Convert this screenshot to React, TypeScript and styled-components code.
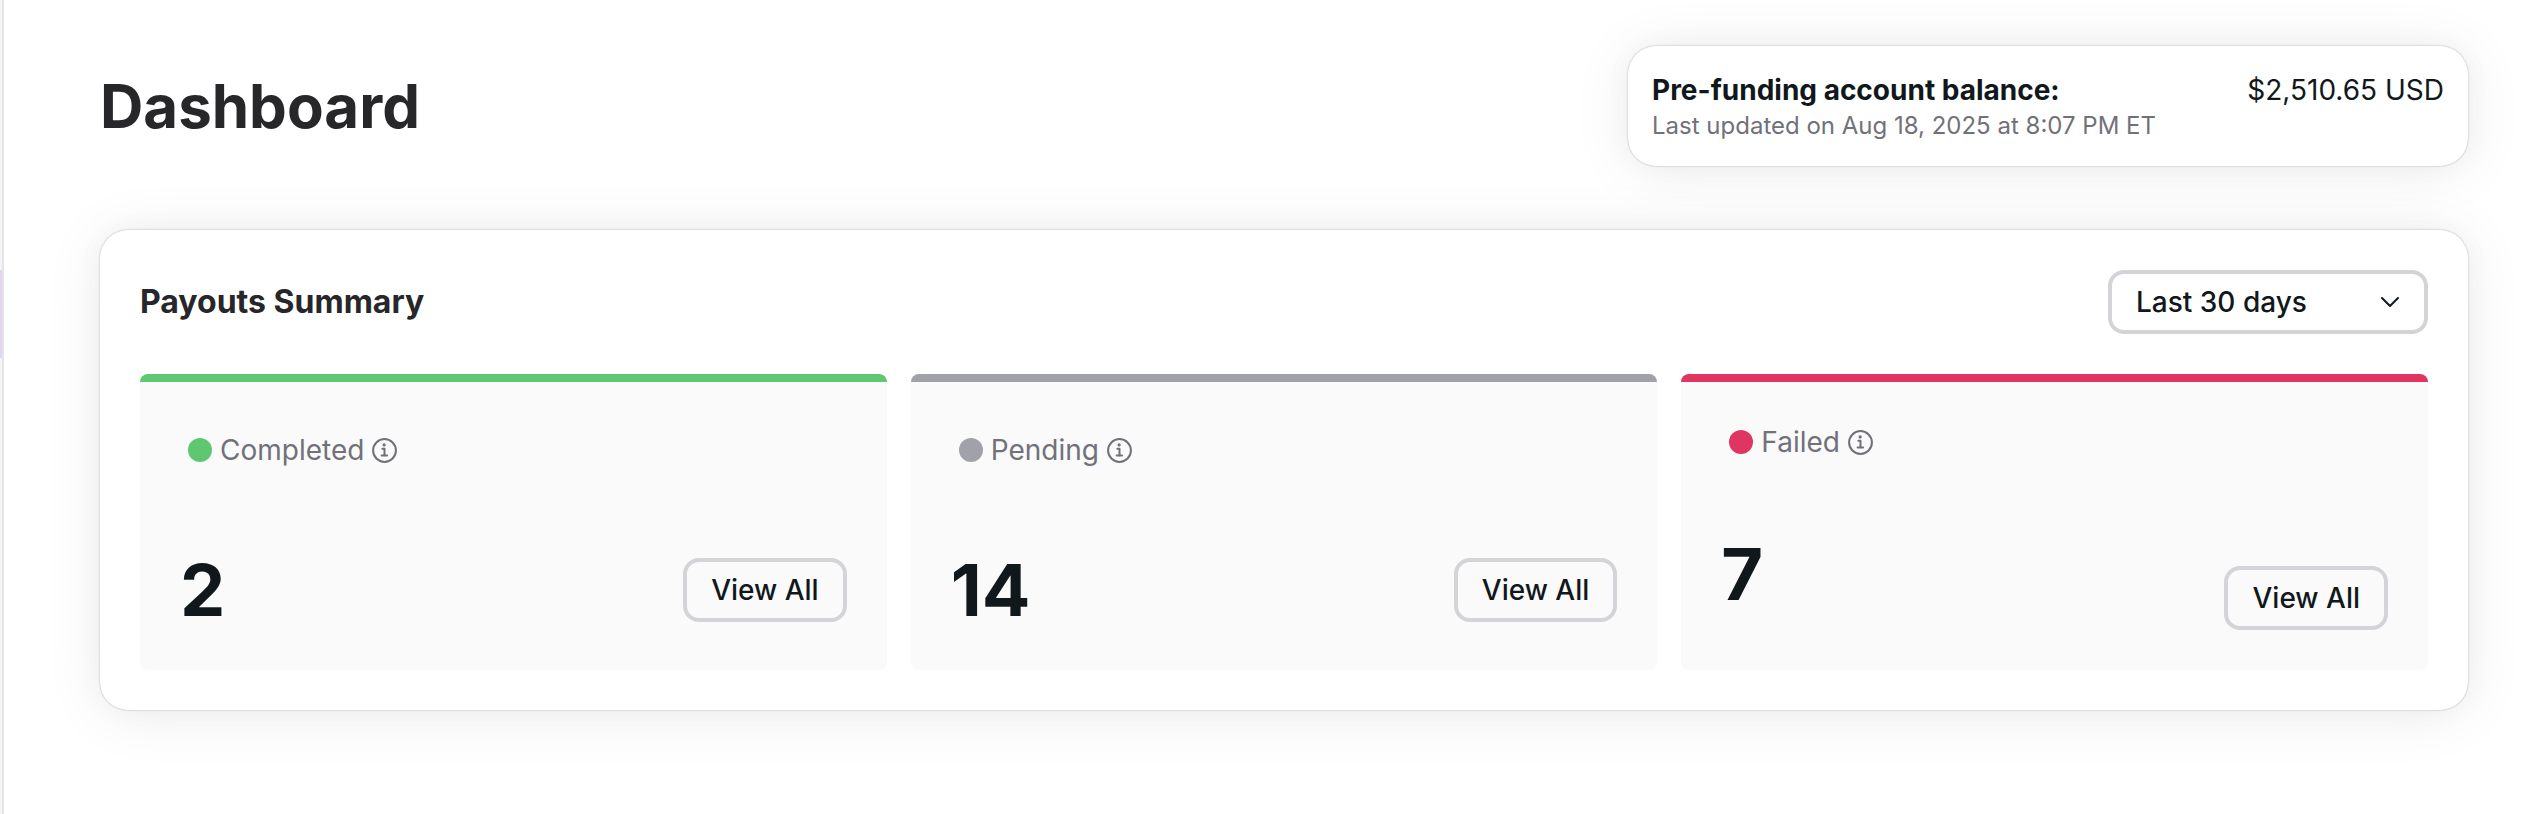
import React from "react";
import styled, { createGlobalStyle } from "styled-components";

const GlobalStyle = createGlobalStyle`
  *, *::before, *::after { box-sizing: border-box; }
  body {
    margin: 0;
    background: #ffffff;
    color: #11181c;
    font-family: Inter, "Liberation Sans", sans-serif;
    font-size: 28px;
    line-height: 40px;
    -webkit-font-smoothing: antialiased;
  }
  h1, h2, p { margin: 0; }
`;

const Page = styled.div`
  display: flex;
  min-height: 100vh;
`;

const SidebarEdge = styled.aside`
  flex: none;
  width: 4px;
  padding-top: 270px;
  background: #f4f4f5;
  border-right: 2px solid #e4e4e7;
`;

const ActiveMarker = styled.div`
  height: 88px;
  background: #e4d4f4;
`;

const Main = styled.main`
  flex: 1;
  min-width: 0;
  display: flex;
  flex-direction: column;
  gap: 64px;
  padding: 46px 74px 64px 96px;
`;

const Header = styled.header`
  display: flex;
  align-items: center;
  justify-content: space-between;
`;

const PageTitle = styled.h1`
  color: #27272a;
  font-size: 60px;
  line-height: 72px;
  font-weight: 700;
`;

const Card = styled.section`
  background: #ffffff;
  border-radius: 28px;
  box-shadow:
    0 0 30px rgba(0, 0, 0, 0.03),
    0 4px 60px rgba(0, 0, 0, 0.08),
    0 0 2px rgba(0, 0, 0, 0.3);
`;

const BalanceCard = styled(Card)`
  display: flex;
  align-items: flex-start;
  justify-content: space-between;
  width: 840px;
  padding: 24px;
`;

const BalanceTitle = styled.p`
  font-weight: 700;
`;

const BalanceNote = styled.p`
  color: #71717a;
  font-size: 24px;
  line-height: 32px;
`;

const SummaryCard = styled(Card)`
  display: flex;
  flex-direction: column;
  gap: 40px;
  padding: 40px;
`;

const SummaryHeader = styled.div`
  display: flex;
  align-items: center;
  justify-content: space-between;
`;

const SummaryTitle = styled.h2`
  color: #27272a;
  font-size: 32px;
  line-height: 48px;
  font-weight: 700;
`;

const SelectWrap = styled.div`
  display: grid;
  align-items: center;
  width: 320px;

  > * { grid-area: 1 / 1; }

  > svg {
    justify-self: end;
    margin-right: 22px;
    pointer-events: none;
  }
`;

const PeriodSelect = styled.select`
  appearance: none;
  width: 100%;
  height: 64px;
  padding: 0 24px;
  border: 4px solid #d4d4d8;
  border-radius: 16px;
  background: transparent;
  color: inherit;
  font: inherit;
  font-weight: 500;
`;

const Tiles = styled.div`
  display: grid;
  grid-template-columns: repeat(3, 1fr);
  gap: 24px;
`;

const Tile = styled.article<{ $accent: string }>`
  display: flex;
  flex-direction: column;
  min-height: 296px;
  border-radius: 8px;
  overflow: hidden;
  background: #fafafa;

  &::before {
    content: "";
    flex: none;
    height: 8px;
    background: ${(p) => p.$accent};
  }
`;

const TileBody = styled.div<{ $stretched?: boolean }>`
  flex: 1;
  display: flex;
  flex-direction: column;
  justify-content: space-between;
  padding: ${(p) => (p.$stretched ? "40px" : "48px 40px")};
`;

const Status = styled.div`
  display: flex;
  align-items: center;
  gap: 8px;
  padding-left: 8px;
  color: #71717a;
`;

const Dot = styled.span<{ $color: string }>`
  width: 24px;
  height: 24px;
  border-radius: 50%;
  background: ${(p) => p.$color};
`;

const TileFooter = styled.div<{ $stretched?: boolean }>`
  display: flex;
  align-items: ${(p) => (p.$stretched ? "flex-start" : "center")};
  justify-content: space-between;
  height: ${(p) => (p.$stretched ? "88px" : "64px")};
`;

const Count = styled.p`
  font-size: 72px;
  line-height: 64px;
  font-weight: 700;
`;

const ViewButton = styled.button<{ $low?: boolean }>`
  align-self: ${(p) => (p.$low ? "flex-end" : "center")};
  height: 64px;
  padding: 0 24px;
  border: 4px solid #d4d4d8;
  border-radius: 16px;
  background: transparent;
  color: inherit;
  font: inherit;
  font-weight: 500;
`;

type Payout = { label: string; count: number; color: string; stretched?: boolean };

const payouts: Payout[] = [
  { label: "Completed", count: 2, color: "#5ec770" },
  { label: "Pending", count: 14, color: "#a1a1aa" },
  { label: "Failed", count: 7, color: "#e03560", stretched: true },
];

function ChevronDown() {
  return (
    <svg width="32" height="32" viewBox="0 0 24 24" fill="none" stroke="currentColor" strokeWidth="1.5" strokeLinecap="round" strokeLinejoin="round" aria-hidden="true">
      <path d="m6 9 6 6 6-6" />
    </svg>
  );
}

function InfoIcon() {
  return (
    <svg width="25" height="25" viewBox="46 46 420 420" fill="none" stroke="currentColor" strokeWidth="34" aria-hidden="true">
      <circle cx="256" cy="256" r="192" />
      <path d="M220 228h36v108" strokeLinecap="round" strokeLinejoin="round" />
      <path d="M208 340h92" strokeLinecap="round" />
      <circle cx="250" cy="162" r="27" fill="currentColor" stroke="none" />
    </svg>
  );
}

function PayoutTile({ label, count, color, stretched }: Payout) {
  return (
    <Tile $accent={color}>
      <TileBody $stretched={stretched}>
        <Status>
          <Dot $color={color} />
          <span>{label}</span>
          <InfoIcon />
        </Status>
        <TileFooter $stretched={stretched}>
          <Count>{count}</Count>
          <ViewButton type="button" $low={stretched}>View All</ViewButton>
        </TileFooter>
      </TileBody>
    </Tile>
  );
}

export default function App() {
  return (
    <>
      <GlobalStyle />
      <Page>
        <SidebarEdge>
          <ActiveMarker />
        </SidebarEdge>
        <Main>
          <Header>
            <PageTitle>Dashboard</PageTitle>
            <BalanceCard>
              <div>
                <BalanceTitle>Pre-funding account balance:</BalanceTitle>
                <BalanceNote>Last updated on Aug 18, 2025 at 8:07 PM ET</BalanceNote>
              </div>
              <p>$2,510.65 USD</p>
            </BalanceCard>
          </Header>
          <SummaryCard>
            <SummaryHeader>
              <SummaryTitle>Payouts Summary</SummaryTitle>
              <SelectWrap>
                <PeriodSelect aria-label="Period" defaultValue="30">
                  <option value="30">Last 30 days</option>
                </PeriodSelect>
                <ChevronDown />
              </SelectWrap>
            </SummaryHeader>
            <Tiles>
              {payouts.map((payout) => (
                <PayoutTile key={payout.label} {...payout} />
              ))}
            </Tiles>
          </SummaryCard>
        </Main>
      </Page>
    </>
  );
}
